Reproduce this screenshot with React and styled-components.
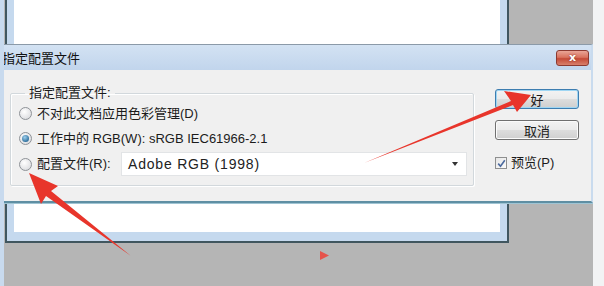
import React from "react";
import styled, { createGlobalStyle } from "styled-components";

const GlobalStyle = createGlobalStyle`
  html, body {
    margin: 0;
    padding: 0;
    background: #b5b5b5;
  }
  body {
    font-family: "Liberation Sans", "Noto Sans CJK SC", sans-serif;
    font-size: 13px;
    color: #1b1b1b;
  }
`;

const Desktop = styled.div`
  position: relative;
  width: 604px;
  height: 286px;
  box-sizing: border-box;
  overflow: hidden;
  border-left: 4px solid #c8daee;
  background: linear-gradient(to right, #b5b5b5 589px, #f2f3f4 589px);
`;

const DocWindow = styled.div`
  position: absolute;
  left: 1px;
  top: -10px;
  width: 504px;
  height: 253px;
  box-sizing: border-box;
  border: 2px solid #40565f;
  background: #c5d9ee;
  padding: 0 7px 9px 7px;
  display: flex;
`;

const DocPaper = styled.div`
  flex: 1;
  background: #ffffff;
`;

const Dialog = styled.div`
  position: absolute;
  left: -6px;
  top: 44px;
  width: 595px;
  height: 159px;
  box-sizing: border-box;
  display: flex;
  flex-direction: column;
  background: #f0f0f0;
  border-top: 1px solid #8b9aa8;
  border-right: 2px solid #c9dbee;
  border-bottom: 2px solid #5f8fa3;
  box-shadow: 0 1px 0 #9fc4d3;
`;

const TitleBar = styled.div`
  height: 25px;
  display: flex;
  align-items: center;
  justify-content: space-between;
  padding: 0 2px 0 4px;
  background: linear-gradient(to bottom, #d3e2f3, #c1d5ec);
  font-size: 13px;
  color: #111;
`;

const CloseButton = styled.div`
  width: 33px;
  height: 16px;
  box-sizing: border-box;
  border: 1px solid #8c3a31;
  border-radius: 3px;
  background: linear-gradient(to bottom, #e9a597 0%, #d9735f 45%, #c44a37 55%, #d8806c 100%);
  display: flex;
  align-items: center;
  justify-content: center;
  color: #fff;
  font-family: "DejaVu Sans", sans-serif;
  font-weight: bold;
  font-size: 11px;
  line-height: 1;
  text-shadow: 0 0 2px #7a2a20;
`;

const Body = styled.div`
  flex: 1;
  display: flex;
  align-items: flex-start;
  padding: 15px 0 0 12px;
  gap: 21px;
`;

const GroupBox = styled.fieldset`
  margin: 0;
  width: 464px;
  box-sizing: border-box;
  padding: 0 6px 8px 8px;
  border: 1px solid #d2d8dc;
  border-radius: 2px;
  box-shadow: inset 1px 1px 0 #fff, 1px 1px 0 #fff;
`;

const Legend = styled.legend`
  margin-left: 6px;
  padding: 0 4px;
  line-height: 16px;
  font-size: 13px;
`;

const OptionRow = styled.div`
  display: flex;
  align-items: center;
  height: ${(p) => p.$h || 25}px;
`;

const Radio = styled.span`
  width: 13px;
  height: 13px;
  box-sizing: border-box;
  border-radius: 50%;
  border: 1px solid #8e9297;
  background: radial-gradient(circle at 40% 35%, #ffffff, #dcdde0 80%);
  margin-right: 5px;
  display: flex;
  align-items: center;
  justify-content: center;
  flex-shrink: 0;
  &::after {
    content: "";
    display: ${(p) => (p.$checked ? "block" : "none")};
    width: 7px;
    height: 7px;
    border-radius: 50%;
    background: radial-gradient(circle at 40% 35%, #9fd0ee, #2b6c9a 75%);
  }
`;

const Label = styled.span`
  white-space: nowrap;
  line-height: 16px;
`;

const Select = styled.div`
  margin-left: auto;
  width: 346px;
  height: 24px;
  box-sizing: border-box;
  border: 1px solid #e2e4e6;
  background: #fff;
  display: flex;
  align-items: center;
  justify-content: space-between;
  padding: 0 8px 0 6px;
  font-size: 14px;
  letter-spacing: 0.8px;
  color: #222;
`;

const Caret = styled.span`
  width: 0;
  height: 0;
  border-left: 3.5px solid transparent;
  border-right: 3.5px solid transparent;
  border-top: 4px solid #333;
`;

const Side = styled.div`
  width: 84px;
  display: flex;
  flex-direction: column;
  padding-top: 4px;
`;

const Button = styled.div`
  height: 20px;
  box-sizing: border-box;
  border: 1px solid ${(p) => (p.$focused ? "#3d7db0" : "#707070")};
  border-radius: 3px;
  background: linear-gradient(to bottom, #f3f3f3 0%, #ebebeb 48%, #dddddd 52%, #cfcfcf 100%);
  box-shadow: ${(p) => (p.$focused ? "inset 0 0 0 1px #9fd6f3" : "inset 0 0 0 1px #fbfbfb")};
  display: flex;
  align-items: center;
  justify-content: center;
  font-size: 13px;
  margin-bottom: ${(p) => p.$mb || 0}px;
`;

const CheckRow = styled.div`
  display: flex;
  align-items: center;
  height: 14px;
  gap: 4px;
`;

const CheckBox = styled.span`
  width: 12px;
  height: 12px;
  box-sizing: border-box;
  border: 1px solid #8e8f8f;
  background: linear-gradient(135deg, #e6e6e6, #fbfbfb);
  display: flex;
  align-items: center;
  justify-content: center;
`;

const Overlay = styled.svg`
  position: absolute;
  left: -4px;
  top: 0;
  pointer-events: none;
`;

export default function App() {
  return (
    <>
      <GlobalStyle />
      <Desktop>
        <DocWindow>
          <DocPaper />
        </DocWindow>
        <Dialog>
          <TitleBar>
            <span>指定配置文件</span>
            <CloseButton>x</CloseButton>
          </TitleBar>
          <Body>
            <GroupBox>
              <Legend>指定配置文件:</Legend>
              <OptionRow>
                <Radio />
                <Label>不对此文档应用色彩管理(D)</Label>
              </OptionRow>
              <OptionRow>
                <Radio $checked />
                <Label>工作中的 RGB(W): sRGB IEC61966-2.1</Label>
              </OptionRow>
              <OptionRow $h={26}>
                <Radio />
                <Label>配置文件(R):</Label>
                <Select>
                  <span>Adobe RGB (1998)</span>
                  <Caret />
                </Select>
              </OptionRow>
            </GroupBox>
            <Side>
              <Button $focused $mb={11}>好</Button>
              <Button $mb={16}>取消</Button>
              <CheckRow>
                <CheckBox>
                  <svg width="9" height="9" viewBox="0 0 9 9">
                    <path d="M1.2 4.6 L3.5 7.2 L7.8 1.2" fill="none" stroke="#4b6a9e" strokeWidth="1.6" />
                  </svg>
                </CheckBox>
                <Label>预览(P)</Label>
              </CheckRow>
            </Side>
          </Body>
        </Dialog>
        <Overlay width="604" height="286" viewBox="0 0 604 286">
          <polygon
            points="364,163 511,101 504,91 531,95 517,112 513,105"
            fill="#e8352b"
          />
          <polygon
            points="131,256 51,191 58,186 29,173 41,204 46,196"
            fill="#e8352b"
          />
          <polygon points="320,251 329,255.5 320,260" fill="#e5534b" />
        </Overlay>
      </Desktop>
    </>
  );
}
